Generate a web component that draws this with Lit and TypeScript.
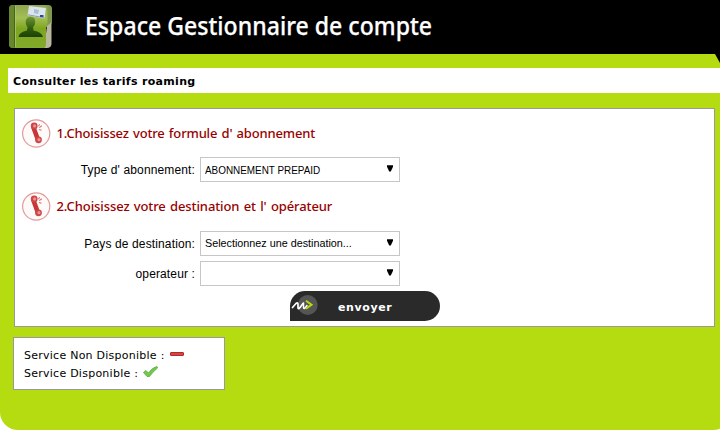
import { LitElement, html, css, svg } from "lit";
import { customElement } from "lit/decorators.js";

@customElement("phone-icon")
class PhoneIcon extends LitElement {
  static styles = css`:host { display: block; width: 30px; height: 30px; flex: none; } svg { display: block; }`;
  render() {
    return html`<svg width="30" height="30" viewBox="0 0 30 30">
      <circle cx="14.2" cy="14.5" r="13.6" fill="#fffafa" stroke="#e39a9a" stroke-width="1.2" />
      <path d="M11.3 8 L15.700 20" stroke="#c93636" stroke-width="4.600" fill="none" />
      <circle cx="12.2" cy="7" r="3.4" fill="#cf4444" /><circle cx="16.500" cy="20.800" r="3.400" fill="#cf4444" />
      <circle cx="12.600" cy="6.900" r="1.600" fill="#e79191" /><circle cx="17" cy="20.700" r="1.600" fill="#e79191" />
      <path d="M16.5 7.300 L17.500 5.300 M17.300 8.600 L19.800 6.700 M17 10.400 L19.500 11.300" stroke="#dc6b6b" stroke-width="1.1" />
    </svg>`;
  }
}

@customElement("select-box")
class SelectBox extends LitElement {
  static styles = css`
    :host { box-sizing: border-box; display: flex; align-items: center; justify-content: space-between; width: 200px; height: 25px; border: 1px solid #c6c6c6; background: #fff; padding: 0 6px 0 4px; font: 11px "Liberation Sans", Arial, sans-serif; color: #000; white-space: nowrap; }
    svg { display: block; margin-bottom: 2px; flex: none; }
  `;
  render() {
    return html`<slot></slot>
      <svg width="6" height="7" viewBox="0 0 6 7"><path d="M0 0.3H6V1.8L3.8 6.5H2.2L0 1.8Z" fill="#000" /></svg>`;
  }
}

const folder = svg`
  <defs>
    <linearGradient id="cover" x1="0" y1="0" x2="0" y2="1"><stop offset="0" stop-color="#8ea650" /><stop offset=".3" stop-color="#a3bf55" /><stop offset=".55" stop-color="#7ea51f" /><stop offset="1" stop-color="#83ab2c" /></linearGradient>
    <linearGradient id="person" x1="0" y1="0" x2="0" y2="1"><stop offset="0" stop-color="#6b9432" /><stop offset=".6" stop-color="#2f5a0c" /><stop offset="1" stop-color="#1c4207" /></linearGradient>
  </defs>
  <path d="M34 0H39Q43 0 43 4V17L41 22H34Z" fill="#7f9a4a" />
  <path d="M42.500 17V39Q42 43 38 43H35L38 21Z" fill="#b9b79e" />
  <path d="M4 0H35Q38.500 0 38.500 4V19L37 23V39Q37 43 34 43H4Q0 43 0 39V4Q0 0 4 0Z" fill="url(#cover)" />
  <path d="M4 0H6V43H4Q0 43 0 39V4Q0 0 4 0" fill="#66852c" />
  <path d="M5.500 1V42" stroke="#45651a" /><path d="M6.500 1V42" stroke="#b3ca74" stroke-width=".7" />
  <path d="M9.500 32Q10 27 18 25.500L18.500 22Q16 19 17 15Q18 11.500 22 12Q26 12 26 16Q26.500 20 24 22L24.500 25.500Q33 27 34 32Z" fill="url(#person)" />
  <path d="M20 1 37 3 35.500 13.500 18.500 10.500Z" fill="#dce4eb" /><path d="M19 9.800 35.500 12.800" stroke="#8e9bab" />
  <path d="M25 4l5 1-1 4-4-1z" fill="#a4bfd8" /><rect x="31" y="10" width="3.500" height="2" fill="#28499a" />
`;

@customElement("app-root")
class AppRoot extends LitElement {
  static styles = css`
    :host { display: block; width: 720px; height: 430px; overflow: hidden; background: #fff; color: #000; }
    * { box-sizing: border-box; }
    svg { display: block; flex: none; }
    .header { height: 54px; background: #000; display: flex; padding: 5px 0 0 9px; }
    .title { margin: 2px 0 0 33px; font: 500 25px/36px "Noto Sans", sans-serif; color: #fff; white-space: nowrap; transform-origin: left; transform: scaleX(.924); -webkit-text-stroke: .25px #fff; }
    .body { position: relative; height: 376px; padding-top: 14px; background: #b5dc10; border-radius: 0 0 18px 18px; width: 731px; }
    .notch { position: absolute; left: 715px; top: 0; }
    .bar { margin-left: 8px; height: 25px; background: #fff; padding-left: 5px; font: bold 11px/28px "DejaVu Sans", Verdana, sans-serif; letter-spacing: .32px; }
    .panel { margin: 15px 0 0 14px; width: 701px; height: 219px; border: 1px solid #999; background: #fff; padding: 10px 0 0 7px; }
    .step { display: flex; height: 30px; align-items: center; color: #900; font: 500 13px/20px "Noto Sans", sans-serif; }
    .step span { margin: 0 0 2px 4.5px; white-space: nowrap; word-spacing: 1px; letter-spacing: -.16px; }
    .step .destination { letter-spacing: -.1px; }
    .row { display: flex; height: 25px; margin-bottom: 5px; align-items: center; font: 12px "Liberation Sans", Arial, sans-serif; }
    .label { width: 173px; margin-right: 5px; text-align: right; white-space: nowrap; letter-spacing: .13px; }
    .value { display: block; transform-origin: left; }
    .plan { transform: scaleX(.9); }
    .country { transform: scaleX(.98); margin-bottom: 1px; }
    .first { margin: 8px 0 10px; }
    .second { margin-top: 9px; }
    .send { display: flex; align-items: center; margin-left: 268px; width: 150px; height: 30px; padding: 0; border: 0; background: #2a2a2a; border-radius: 15px 15px 15px 0; color: #fff; font: bold 11px "DejaVu Sans", Verdana, sans-serif; letter-spacing: .6px; }
    .send span { margin: 2px 0 0 16px; }
    .legend { margin: 10px 0 0 13px; width: 212px; height: 53px; border: 1px solid #999; background: #fff; padding: 8px 0 0 10px; font: 11px/18px "DejaVu Sans", Verdana, sans-serif; letter-spacing: .25px; }
    .line { display: flex; height: 18px; white-space: nowrap; }
    .line span { height: 18px; padding-top: .5px; }
    .line svg { margin-left: 5px; }
  `;
  render() {
    return html`
      <div class="header">
        <svg width="43" height="43" viewBox="0 0 43 43">${folder}</svg>
        <div class="title">Espace Gestionnaire de compte</div>
      </div>
      <div class="body">
        <svg class="notch" width="5" height="9"><path d="M0 0H5V9Z" fill="#000" /></svg>
        <div class="bar">Consulter les tarifs roaming</div>
        <div class="panel">
          <div class="step"><phone-icon></phone-icon><span>1.Choisissez votre formule d' abonnement</span></div>
          <div class="row first"><span class="label">Type d' abonnement:</span><select-box><span class="value plan">ABONNEMENT PREPAID</span></select-box></div>
          <div class="step"><phone-icon></phone-icon><span class="destination">2.Choisissez votre destination et l' opérateur</span></div>
          <div class="row second"><span class="label">Pays de destination:</span><select-box><span class="value country">Selectionnez une destination...</span></select-box></div>
          <div class="row"><span class="label">operateur :</span><select-box><span class="value"></span></select-box></div>
          <button class="send">
            <svg width="32" height="30" viewBox="0 0 32 30">
              <circle cx="17.700" cy="14" r="10" fill="#555" />
              <path d="M2.500 16.500L6 12.500Q8 11 8 13.500L8 17Q8.500 18.500 10 16.500L13 12.500" fill="none" stroke="#fff" stroke-width="1.700" stroke-linecap="round" stroke-linejoin="round" />
              <path d="M13.500 12V16.500Q14 18.500 15.500 16.500L17 14.500" fill="none" stroke="#fff" stroke-width="1.500" stroke-linecap="round" />
              <path d="M16 9.800L21.500 13.800L16 17.800" fill="none" stroke="#b5dc10" stroke-width="2" />
            </svg><span>envoyer</span>
          </button>
        </div>
        <div class="legend">
          <div class="line"><span>Service Non Disponible :</span><svg width="15" height="18"><rect x=".5" y="6.500" width="13" height="3" rx=".5" fill="#d94343" stroke="#ae2c2c" /></svg></div>
          <div class="line"><span>Service Disponible :</span><svg width="16" height="18"><path d="M.5 8.500L3 6.500L5.500 9Q9 3.500 14 2.500L14.500 4Q9.500 8 6.500 12.500H4Z" fill="#72c94b" stroke="#58ab42" stroke-width=".8" /></svg></div>
        </div>
      </div>`;
  }
}
